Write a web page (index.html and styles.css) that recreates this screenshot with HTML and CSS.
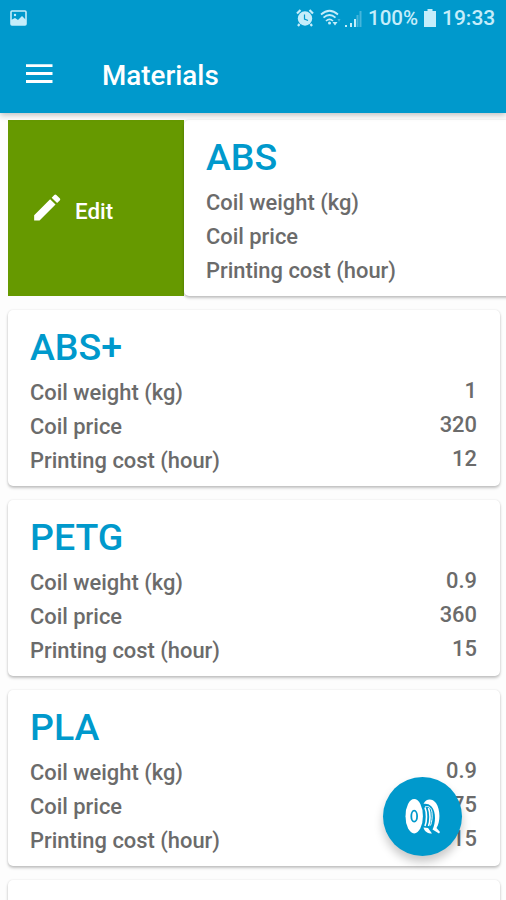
FILE: index.html
```html
<!DOCTYPE html>
<html lang="en">
<head>
<meta charset="utf-8">
<title>Materials</title>
<link rel="stylesheet" href="styles.css">
</head>
<body>
<div class="screen">
  <header class="top">
    <div class="status">
      <svg class="photo" width="17" height="16" viewBox="0 0 17 16"><rect x="1" y="1" width="15" height="14" rx="1" fill="none" stroke="currentColor" stroke-width="1.6"/><path d="M1 15V10L5 8l3 2 4-4 4 4v5z" fill="currentColor"/><circle cx="5" cy="5" r="1.2" fill="currentColor"/></svg>
      <div class="indicators">
        <svg class="alarm" width="18" height="18" viewBox="0 0 18 18"><circle cx="9" cy="9.500" r="7.200" fill="currentColor"/><path d="M1 4.500 4.500 1M17 4.500 13.500 1M3.500 15 2 17M14.500 15l1.500 2" stroke="currentColor" stroke-width="2.200"/><path d="M8.500 5.500V10l3.500 1.500" fill="none" stroke="#0099cc" stroke-width="1.200"/></svg>
        <svg class="wifi" width="22" height="18" viewBox="0 0 22 18"><g fill="none" stroke="currentColor" stroke-width="1.700"><path d="M1 5.500Q9.500-2 18 5.500M3.500 8.700q6-5.400 12 0M6 12q3.500-3.300 7 0"/></g><circle cx="9.500" cy="14" r="1.500" fill="currentColor"/><path d="M12.500 13h5L15 16.500z" fill="currentColor"/><path d="M17.500 10h3l-1.500 3z" fill="currentColor" opacity=".35"/></svg>
        <svg class="signal" width="18" height="17" viewBox="0 0 18 17"><path d="M1 14h2v2H1zM6 12h2v4H6zM10 8h2v8h-2z" fill="currentColor"/><path d="M12.500 4h2v12h-2zM15.500 0h2v16h-2z" fill="currentColor" opacity=".35"/></svg>
        <span class="percent">100%</span>
        <svg class="battery" width="12" height="18" viewBox="0 0 12 18"><path d="M3.500 0h5v2H12v16H0V2h3.500z" fill="currentColor"/></svg>
        <span class="clock">19:33</span>
      </div>
    </div>
    <div class="toolbar">
      <svg class="menu" width="27" height="20" viewBox="0 0 27 20"><path d="M0 1.700h26.500M0 9.500h26.500M0 17.500h26.500" stroke="#fff" stroke-width="2.800"/></svg>
      <h1>Materials</h1>
    </div>
  </header>

  <main class="list">
    <div class="swipe-row">
      <div class="edit">
        <svg width="28" height="28" viewBox="2.200 2.600 19.400 19.400"><path fill="#fff" d="M3 17.250V21h3.750L17.810 9.940l-3.750-3.750L3 17.250zM20.710 7.040a1 1 0 0 0 0-1.410l-2.340-2.340a1 1 0 0 0-1.410 0l-1.830 1.830 3.750 3.750 1.830-1.830z"/></svg>
        <span>Edit</span>
      </div>
      <section class="card shifted">
        <h2>ABS</h2>
        <dl><div><dt>Coil weight (kg)</dt></div><div><dt>Coil price</dt></div><div><dt>Printing cost (hour)</dt></div></dl>
      </section>
    </div>
    <section class="card">
      <h2>ABS+</h2>
      <dl><div><dt>Coil weight (kg)</dt><dd>1</dd></div><div><dt>Coil price</dt><dd>320</dd></div><div><dt>Printing cost (hour)</dt><dd>12</dd></div></dl>
    </section>
    <section class="card">
      <h2>PETG</h2>
      <dl><div><dt>Coil weight (kg)</dt><dd>0.9</dd></div><div><dt>Coil price</dt><dd>360</dd></div><div><dt>Printing cost (hour)</dt><dd>15</dd></div></dl>
    </section>
    <section class="card">
      <h2>PLA</h2>
      <dl><div><dt>Coil weight (kg)</dt><dd>0.9</dd></div><div><dt>Coil price</dt><dd>375</dd></div><div><dt>Printing cost (hour)</dt><dd>15</dd></div></dl>
    </section>
    <section class="card"></section>
  </main>

  <button class="fab" aria-label="Add material">
    <svg width="36" height="36" viewBox="0 0 36 36">
      <ellipse cx="9.200" cy="17.200" rx="8.700" ry="17.200" fill="#fff"/>
      <ellipse cx="9.200" cy="17.200" rx="2.900" ry="5.500" fill="none" stroke="#0099cc" stroke-width="1.800"/>
      <path d="M18.500 5C21-.5 27-1 31 4c4.500 6.500 4.500 19 .5 25l3.500 4-1 1.500-6.500-4C31 24 31 12 26.500 7.500 24 5 21 4.500 18.500 5z" fill="#fff"/>
      <path d="M20 8.500c2 5 2 13.500 0 18.500M23.500 9c2 5 2 13 0 18" fill="none" stroke="#fff" stroke-width="1.600"/>
      <path d="M20 8c4-1.500 6.500 1 7 5.500.6 5-.2 9.500-1.500 13" fill="none" stroke="#fff" stroke-width="1"/>
      <path d="M18.500 28.500c1 4 4 6 8.500 6l-4-5.500z" fill="#fff"/>
    </svg>
  </button>
</div>
</body>
</html>
```
FILE: styles.css
```css
* { box-sizing: border-box; }
body { margin: 0; font-family: Roboto, sans-serif; font-weight: 500; background: #fdfdfd; }
h1, h2, dl, dd { margin: 0; font-weight: 500; }
svg { display: block; flex: none; }
.screen { position: relative; height: 900px; overflow: hidden; }
.top { height: 113px; background: #0099cc; box-shadow: 0 2px 6px rgba(0,0,0,.25); position: relative; z-index: 1; }
.status { height: 36px; padding: 0 11px 0 10px; display: flex; align-items: center; justify-content: space-between; color: #c5edfa; }
.indicators { display: flex; align-items: center; font-size: 20.500px; line-height: 36px; }
.wifi { margin-left: 6px; }
.signal { margin: 2px 6px 0 2px; }
.percent { width: 51px; white-space: nowrap; }
.battery { margin: 0 6px 0 5px; }
.clock { width: 53px; font-size: 21px; white-space: nowrap; }
.toolbar { height: 77px; display: flex; align-items: center; padding: 0 26px; }
.menu { margin-top: -2px; }
.toolbar h1 { margin: 3px 0 0 49px; color: #fff; font-size: 27.800px; line-height: 36px; }
.list { padding: 7px 6px 0 8px; display: flex; flex-direction: column; gap: 14px; }
.swipe-row { display: flex; height: 176px; width: 668px; }
.edit { width: 175.500px; flex: none; background: #669900; color: #fff; display: flex; align-items: center; gap: 14px; padding-left: 25px; font-size: 22.300px; }
.edit svg { margin-top: -1px; }
.edit span { padding-top: 5px; line-height: 26px; }
.card { height: 176px; flex: none; padding: 15px 23px 0 22px; border-radius: 5px; background: #fff; box-shadow: 0 2px 3px rgba(0,0,0,.23), 0 0 2px rgba(0,0,0,.1); }
.shifted { width: 492px; margin-left: .5px; }
.card h2 { color: #0099cc; font-size: 37.500px; line-height: 44px; }
.card dl { margin-top: 7px; color: #6b6b6b; font-size: 21.900px; line-height: 34px; }
.card dl div { display: flex; justify-content: space-between; height: 33.800px; }
.card dd { margin-top: -2px; }
.fab { position: absolute; left: 383px; top: 777px; width: 79px; height: 79px; padding: 0; border: 0; border-radius: 50%; background: #0099cc; box-shadow: 0 6px 10px rgba(0,0,0,.22); display: flex; align-items: center; justify-content: center; z-index: 2; }
```
